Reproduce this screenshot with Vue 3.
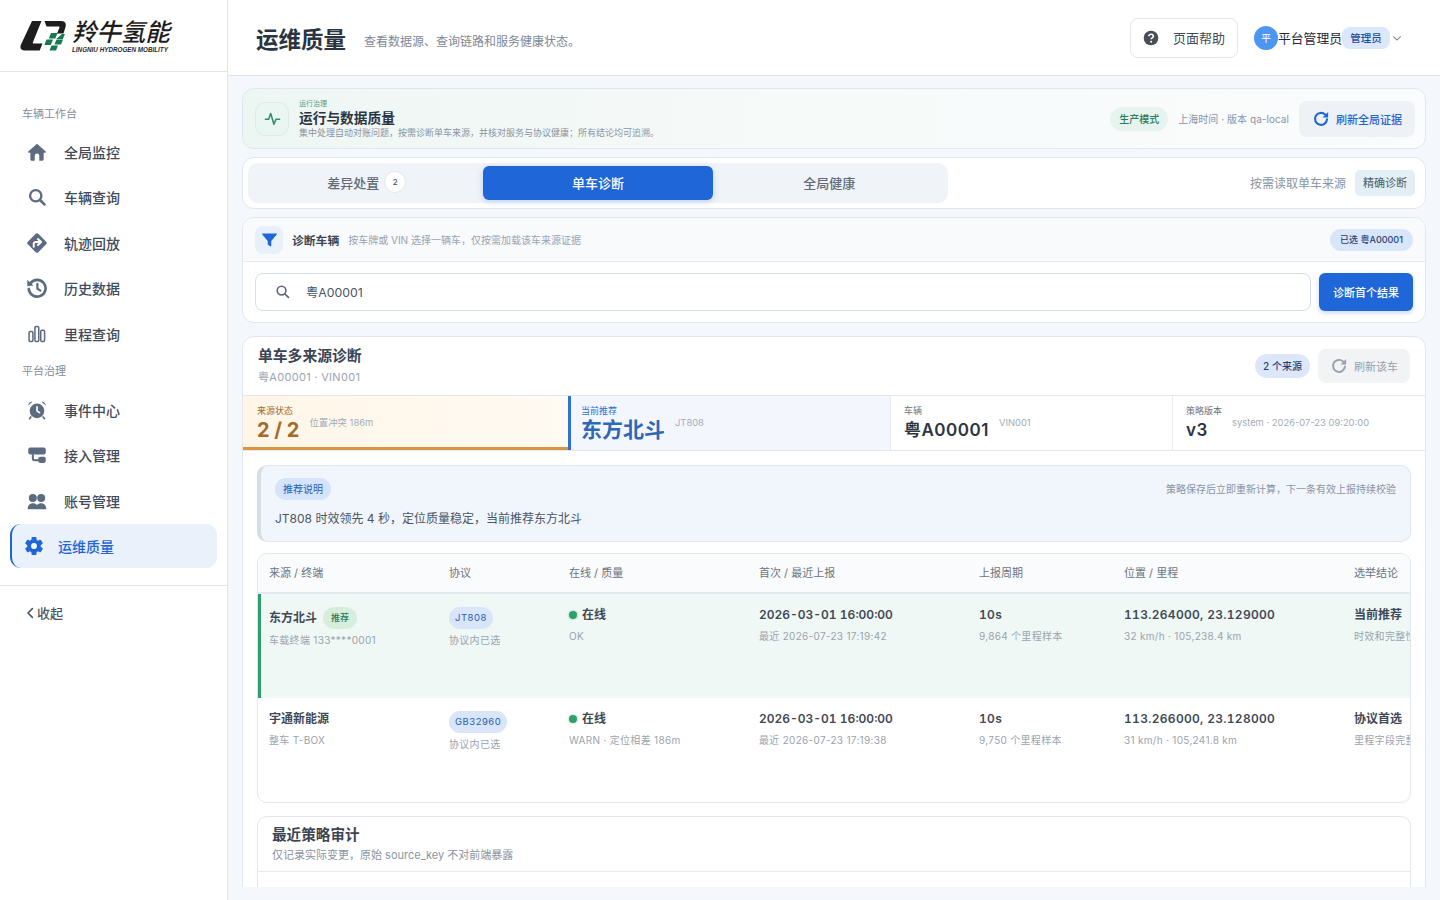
<script setup>
const gearTeeth = [0, 60, 120, 180, 240, 300]

const icons = {
  home: '<path transform="translate(12 12) scale(1.14) translate(-12 -12)" fill="currentColor" d="M12 3.2 2.8 11.6c-.5.5-.2 1.3.5 1.3H5V20a1.2 1.2 0 0 0 1.2 1.2H9.6V16a2.4 2.4 0 0 1 4.8 0v5.2h3.4A1.2 1.2 0 0 0 19 20v-7.1h1.7c.7 0 1-.8.5-1.3Z"/>',
  search: '<circle cx="10.5" cy="10.5" r="6.8" fill="none" stroke="currentColor" stroke-width="2.8"/><path d="M15.6 15.6 21 21" stroke="currentColor" stroke-width="3" stroke-linecap="round"/>',
  route: '<g transform="translate(12 12) scale(1.12) translate(-12 -12)"><path fill="currentColor" d="M10.6 2.2a2 2 0 0 1 2.8 0l8.4 8.4a2 2 0 0 1 0 2.8l-8.4 8.4a2 2 0 0 1-2.8 0l-8.4-8.4a2 2 0 0 1 0-2.8Z"/><path d="M8.5 16v-2.6a2.4 2.4 0 0 1 2.4-2.4h4.6M13 7.8l3.4 3.2-3.4 3.2" fill="none" stroke="#fff" stroke-width="2.1" stroke-linecap="round" stroke-linejoin="round"/></g>',
  history: '<g transform="translate(12 12) scale(1.12) translate(-12 -12)"><path d="M5 6.8A9 9 0 1 1 3.2 13" fill="none" stroke="currentColor" stroke-width="2.8" stroke-linecap="round"/><path fill="currentColor" d="M1.6 3.2 8.2 9.4 1.6 10Z"/><path d="M12.4 7.6V12.6l3.2 2.2" fill="none" stroke="currentColor" stroke-width="2.4" stroke-linecap="round" stroke-linejoin="round"/></g>',
  bars: '<g fill="none" stroke="currentColor" stroke-width="1.8"><rect x="2.5" y="9" width="4.6" height="12" rx="1.4"/><rect x="9.500" y="3" width="4.6" height="18" rx="1.4"/><rect x="16.500" y="7.5" width="4.6" height="13.5" rx="1.4"/></g>',
  alarm: '<circle cx="12" cy="13" r="8.8" fill="currentColor"/><path d="M12 8.2V13l3 2.2" fill="none" stroke="#fff" stroke-width="2" stroke-linecap="round" stroke-linejoin="round"/><path fill="currentColor" d="M1.4 6.600C1.600 3.800 4 1.600 6.600 2.200ZM22.600 6.600c-.2-2.800-2.600-5-5.200-4.400Z"/><path d="m4.600 20.400-1.600 2M19.400 20.400l1.600 2" stroke="currentColor" stroke-width="2" stroke-linecap="round"/>',
  access: '<rect x="1.500" y="3" width="21" height="8.500" rx="2.400" fill="currentColor"/><path d="M7 11v5.200a2 2 0 0 0 2 2h6" fill="none" stroke="currentColor" stroke-width="2.400"/><rect x="13.500" y="14" width="9" height="7.500" rx="2.200" fill="currentColor"/>',
  users: '<g fill="currentColor"><circle cx="7" cy="8.500" r="4.800"/><circle cx="17" cy="8.500" r="4.800"/><path d="M.8 22c0-4.800 2.600-7.400 6.200-7.400 2 0 3.700.8 5 2.200 1.300-1.400 3-2.200 5-2.200 3.600 0 6.200 2.600 6.200 7.400Z"/></g>'
}

const workbench = [
  { label: '全局监控', icon: icons.home },
  { label: '车辆查询', icon: icons.search },
  { label: '轨迹回放', icon: icons.route },
  { label: '历史数据', icon: icons.history },
  { label: '里程查询', icon: icons.bars }
]

const platform = [
  { label: '事件中心', icon: icons.alarm },
  { label: '接入管理', icon: icons.access },
  { label: '账号管理', icon: icons.users }
]

const columns = ['来源 / 终端', '协议', '在线 / 质量', '首次 / 最近上报', '上报周期', '位置 / 里程', '选举结论']

const sources = [
  {
    name: '东方北斗', recommended: true, terminal: '车载终端 133****0001', protocol: 'JT808',
    quality: 'OK', first: '2026-03-01 16:00:00', last: '最近 2026-07-23 17:19:42',
    cycle: '10s', samples: '9,864 个里程样本', position: '113.264000, 23.129000',
    speed: '32 km/h · 105,238.4 km', verdict: '当前推荐', reason: '时效和完整性评分最高'
  },
  {
    name: '宇通新能源', recommended: false, terminal: '整车 T-BOX', protocol: 'GB32960',
    quality: 'WARN · 定位相差 186m', first: '2026-03-01 16:00:00', last: '最近 2026-07-23 17:19:38',
    cycle: '10s', samples: '9,750 个里程样本', position: '113.266000, 23.128000',
    speed: '31 km/h · 105,241.8 km', verdict: '协议首选', reason: '里程字段完整度较高'
  }
]
</script>

<template>
  <div class="shell">
    <aside class="sidebar">
      <div class="brand">
        <svg class="mark" viewBox="0 0 46 31" width="46" height="31">
          <path fill="#1d1d1d" d="M12 1h9.500L13 22c-.4 1 .1 1.500 1 1.500h8.500l-2.800 7H5c-4 0-5.500-2.500-4-6Z"/>
          <path fill="#1d1d1d" d="M24.500 1H41c4 0 5.500 2.500 4.500 6l-2 6.500h-6.500L39.500 7.500c.2-.6 0-1-.7-1H26.500Z"/>
          <path fill="#16794f" d="M31 13h6.500l-2.200 5.500h-6.500ZM42 14h3l-2.200 5h-6.500ZM26.500 19.500h6.500l-2.200 5.500h-6.500ZM36.500 19.500h6.500l-2 5h-6.500ZM31.500 25.500h6.500l-2 5h-6.500Z"/>
        </svg>
        <div class="brand-text">
          <div class="brand-cn">羚牛氢能</div>
          <div class="brand-en">LINGNIU HYDROGEN MOBILITY</div>
        </div>
      </div>
      <nav class="nav">
        <div class="nav-label">车辆工作台</div>
        <a v-for="item in workbench" :key="item.label" class="nav-item">
          <svg class="nav-icon" viewBox="0 0 24 24" v-html="item.icon"></svg>
          <span>{{ item.label }}</span>
        </a>
        <div class="nav-label second">平台治理</div>
        <a v-for="item in platform" :key="item.label" class="nav-item">
          <svg class="nav-icon" viewBox="0 0 24 24" v-html="item.icon"></svg>
          <span>{{ item.label }}</span>
        </a>
        <a class="nav-item active">
          <svg class="nav-icon" viewBox="0 0 24 24">
            <g fill="currentColor">
              <circle cx="12" cy="12" r="8.200" />
              <rect v-for="deg in gearTeeth" :key="deg" x="9" y="1.200" width="6" height="5" rx="1.200" :transform="`rotate(${deg} 12 12)`" />
            </g>
            <circle cx="12" cy="12" r="3.500" fill="#fff" />
          </svg>
          <span>运维质量</span>
        </a>
      </nav>
      <div class="collapse">
        <svg viewBox="0 0 10 14" width="8" height="12"><path d="M8 1.500 2.500 7 8 12.500" fill="none" stroke="#4b5563" stroke-width="2" stroke-linecap="round" stroke-linejoin="round"/></svg>
        <span>收起</span>
      </div>
    </aside>

    <div class="page">
      <header class="topbar">
        <h1>运维质量</h1>
        <p>查看数据源、查询链路和服务健康状态。</p>
        <button class="help">
          <svg viewBox="0 0 24 24" width="16" height="16"><circle cx="12" cy="12" r="11" fill="#4a4f57"/><path d="M8.600 9.300c.2-1.900 1.600-3 3.500-3 2 0 3.400 1.200 3.400 2.900 0 2.500-3.300 2.500-3.300 4.800" fill="none" stroke="#fff" stroke-width="2.300"/><circle cx="12.200" cy="17.500" r="1.500" fill="#fff"/></svg>
          <span>页面帮助</span>
        </button>
        <div class="user">
          <span class="avatar">平</span>
          <span class="user-name">平台管理员</span>
          <span class="user-role">管理员</span>
          <svg viewBox="0 0 12 12" width="10" height="10"><path d="m1.500 4 4.500 4.500L10.500 4" fill="none" stroke="#7b8592" stroke-width="1.300"/></svg>
        </div>
      </header>

      <main class="main">
        <section class="card hero">
          <div class="hero-icon">
            <svg viewBox="0 0 24 24" width="17" height="17"><path d="M2 13h4.500l3-8 4.500 15 3-7h5" fill="none" stroke="#2f8f68" stroke-width="2.200" stroke-linecap="round" stroke-linejoin="round"/></svg>
          </div>
          <div class="hero-text">
            <div class="hero-eyebrow">运行治理</div>
            <div class="hero-title">运行与数据质量</div>
            <div class="hero-desc">集中处理自动对账问题，按需诊断单车来源，并核对服务与协议健康；所有结论均可追溯。</div>
          </div>
          <span class="mode-tag">生产模式</span>
          <span class="hero-meta">上海时间 · 版本 qa-local</span>
          <button class="refresh-all">
            <svg viewBox="0 0 24 24" width="18" height="18"><path d="M20 12.500A8 8 0 1 1 17.500 6" fill="none" stroke="#1f66d9" stroke-width="2.800" stroke-linecap="round"/><path fill="#1f66d9" d="M21.500 2.500v7.500H14Z"/></svg>
            <span>刷新全局证据</span>
          </button>
        </section>

        <section class="card tabs-card">
          <div class="tabs">
            <button class="tab">差异处置<span class="tab-badge">2</span></button>
            <button class="tab current">单车诊断</button>
            <button class="tab">全局健康</button>
          </div>
          <span class="tabs-hint">按需读取单车来源</span>
          <span class="exact-tag">精确诊断</span>
        </section>

        <section class="card filter">
          <div class="filter-head">
            <div class="filter-icon">
              <svg viewBox="0 0 24 24" width="17" height="17"><path fill="#1f66d9" d="M2.500 3.500h19c.8 0 1.200.9.700 1.500L14.500 14v6.800c0 .8-.9 1.200-1.500.8l-3-2.200a1 1 0 0 1-.5-.8V14L1.800 5c-.5-.6-.1-1.500.7-1.500Z"/></svg>
            </div>
            <strong>诊断车辆</strong>
            <span class="filter-desc">按车牌或 VIN 选择一辆车，仅按需加载该车来源证据</span>
            <span class="selected-tag">已选 粤A00001</span>
          </div>
          <div class="filter-body">
            <div class="search-box">
              <svg viewBox="0 0 24 24" width="15" height="15"><circle cx="10.500" cy="10.500" r="7" fill="none" stroke="#5f6874" stroke-width="2.600"/><path d="m16 16 5.500 5.500" stroke="#5f6874" stroke-width="2.800" stroke-linecap="round"/></svg>
              <span>粤A00001</span>
            </div>
            <button class="primary">诊断首个结果</button>
          </div>
        </section>

        <section class="card detail">
          <div class="detail-head">
            <div class="detail-title">
              <h2>单车多来源诊断</h2>
              <div class="detail-sub">粤A00001 · VIN001</div>
            </div>
            <span class="count-tag">2 个来源</span>
            <button class="refresh-one">
              <svg viewBox="0 0 24 24" width="18" height="18"><path d="M20 12.500A8 8 0 1 1 17.500 6" fill="none" stroke="#98a1ac" stroke-width="2.600" stroke-linecap="round"/><path fill="#98a1ac" d="M21.500 2.500v7.500H14Z"/></svg>
              <span>刷新该车</span>
            </button>
          </div>

          <div class="kpis">
            <div class="kpi warn">
              <div>
                <div class="kpi-label">来源状态</div>
                <div class="kpi-value">2 / 2</div>
              </div>
              <span class="kpi-note">位置冲突 186m</span>
            </div>
            <div class="kpi pick">
              <div>
                <div class="kpi-label">当前推荐</div>
                <div class="kpi-value">东方北斗</div>
              </div>
              <span class="kpi-note">JT808</span>
            </div>
            <div class="kpi">
              <div>
                <div class="kpi-label">车辆</div>
                <div class="kpi-value">粤A00001</div>
              </div>
              <span class="kpi-note">VIN001</span>
            </div>
            <div class="kpi">
              <div>
                <div class="kpi-label">策略版本</div>
                <div class="kpi-value">v3</div>
              </div>
              <span class="kpi-note">system · 2026-07-23 09:20:00</span>
            </div>
          </div>

          <div class="detail-body">
            <div class="advice">
              <div class="advice-top">
                <span class="advice-tag">推荐说明</span>
                <span class="advice-hint">策略保存后立即重新计算，下一条有效上报持续校验</span>
              </div>
              <div class="advice-text">JT808 时效领先 4 秒，定位质量稳定，当前推荐东方北斗</div>
            </div>

            <div class="table">
              <div class="row head">
                <div v-for="col in columns" :key="col" class="cell">{{ col }}</div>
              </div>
              <div v-for="src in sources" :key="src.name" class="row" :class="{ best: src.recommended }">
                <div class="cell">
                  <div class="name-line" :class="{ tall: src.recommended }">
                    <strong>{{ src.name }}</strong>
                    <span v-if="src.recommended" class="best-tag">推荐</span>
                  </div>
                  <div class="sub" :class="{ tight: src.recommended }">{{ src.terminal }}</div>
                </div>
                <div class="cell">
                  <span class="proto-tag">{{ src.protocol }}</span>
                  <div class="sub tight">协议内已选</div>
                </div>
                <div class="cell">
                  <div class="online"><i class="dot"></i><strong>在线</strong></div>
                  <div class="sub">{{ src.quality }}</div>
                </div>
                <div class="cell">
                  <strong class="mono time">{{ src.first }}</strong>
                  <div class="sub">{{ src.last }}</div>
                </div>
                <div class="cell">
                  <strong class="mono">{{ src.cycle }}</strong>
                  <div class="sub">{{ src.samples }}</div>
                </div>
                <div class="cell">
                  <strong class="mono">{{ src.position }}</strong>
                  <div class="sub">{{ src.speed }}</div>
                </div>
                <div class="cell">
                  <strong>{{ src.verdict }}</strong>
                  <div class="sub">{{ src.reason }}</div>
                </div>
              </div>
            </div>

            <div class="audit">
              <div class="audit-head">
                <h3>最近策略审计</h3>
                <p>仅记录实际变更，原始 source_key 不对前端暴露</p>
              </div>
              <div class="audit-body"></div>
            </div>
          </div>
        </section>
      </main>
    </div>
  </div>
</template>

<style>
html, body { margin: 0; background: #f4f7fb; }
</style>

<style scoped>
* { box-sizing: border-box; }
.shell {
  display: flex;
  width: 1440px;
  height: 900px;
  overflow: hidden;
  font-family: Inter, "Noto Sans CJK SC", sans-serif;
  color: #1f2937;
}
button { font-family: inherit; cursor: pointer; }
h1, h2, h3, p { margin: 0; }

.sidebar {
  width: 228px;
  flex-shrink: 0;
  background: #fff;
  border-right: 1px solid #dfe4ec;
}
.brand {
  display: flex;
  gap: 6px;
  height: 72px;
  padding: 19px 0 0 20px;
  border-bottom: 1px solid #e3e7ed;
}
.mark { margin-top: 1px; }
.brand-cn {
  font-size: 24.500px;
  line-height: 27px;
  font-style: italic;
  font-weight: 500;
  letter-spacing: -.1px;
  color: #1d1d1d;
}
.brand-en {
  font-family: "Liberation Sans", sans-serif;
  font-size: 6.300px;
  line-height: 8px;
  font-style: italic;
  font-weight: 700;
  color: #2a2a2a;
}
.nav { padding: 27px 10px 17px; border-bottom: 1px solid #e3e7ed; }
.nav-label {
  height: 31px;
  padding: 7px 0 0 12px;
  font-size: 11px;
  line-height: 16px;
  color: #858e9b;
}
.nav-label.second { margin-top: 1px; padding-top: 6px; height: 31px; }
.nav-item {
  display: flex;
  align-items: center;
  gap: 17px;
  height: 44px;
  margin-bottom: 1.400px;
  padding-left: 17px;
  font-size: 14px;
  font-weight: 500;
  color: #414b5a;
}
.nav-icon { width: 20px; height: 20px; color: #5c6b80; }
.nav-item.active {
  height: 44px;
  margin: 0;
  padding-left: 12px;
  gap: 14px;
  color: #1f66d9;
  background: #ebf1fb;
  border-left: 2.500px solid #1f66d9;
  border-radius: 11px;
}
.nav-item.active .nav-icon { color: #1f66d9; }
.collapse {
  display: flex;
  align-items: center;
  gap: 3px;
  padding: 18px 0 0 26px;
  font-size: 13px;
  line-height: 18px;
  font-weight: 500;
  color: #4b5563;
}

.page { flex: 1; min-width: 0; display: flex; flex-direction: column; }
.topbar {
  display: flex;
  align-items: center;
  height: 76px;
  flex-shrink: 0;
  padding: 0 38px 0 28px;
  background: #fff;
  border-bottom: 1px solid #dfe5ee;
}
.topbar h1 { font-size: 22.500px; font-weight: 600; color: #2b3442; }
.topbar p { margin: 6px 0 0 18px; font-size: 12px; color: #7f8896; }
.help {
  display: flex;
  align-items: center;
  gap: 14px;
  height: 40px;
  margin-left: auto;
  padding: 0 12px;
  font-size: 13px;
  color: #414b5a;
  background: #fff;
  border: 1px solid #e2e6ec;
  border-radius: 8px;
}
.user { display: flex; align-items: center; margin-left: 16px; }
.avatar {
  width: 24px;
  height: 24px;
  border-radius: 50%;
  background: #4c96f0;
  color: #fff;
  font-size: 10px;
  line-height: 24px;
  text-align: center;
}
.user-name { font-size: 12.800px; color: #1f2937; }
.user-role {
  width: 48px;
  height: 22px;
  margin-right: 2px;
  font-size: 10.500px;
  font-weight: 500;
  line-height: 23px;
  text-align: center;
  color: #1f4b99;
  background: #dbe8fb;
  border-radius: 8px;
}

.main {
  flex: 1;
  min-height: 0;
  margin: 12px 14px 13px;
  display: flex;
  flex-direction: column;
  gap: 8px;
  overflow: hidden;
}
.card {
  flex-shrink: 0;
  background: #fff;
  border: 1px solid #e2e7ee;
  border-radius: 12px;
}

.hero {
  display: flex;
  align-items: center;
  height: 61px;
  padding: 0 10px 0 12px;
  background: linear-gradient(90deg, #eef6f3 0%, #f6faf9 45%, #fbfcfd 100%);
}
.hero-icon {
  display: flex;
  align-items: center;
  justify-content: center;
  width: 34px;
  height: 34px;
  margin-right: 10px;
  background: #e9f6f1;
  border: 1px solid #dcebe5;
  border-radius: 10px;
}
.hero-eyebrow { font-size: 7px; line-height: 9px; color: #4f9a7c; }
.hero-title { margin-top: 1px; font-size: 13.700px; line-height: 18px; font-weight: 600; color: #2b3442; }
.hero-desc { font-size: 9px; line-height: 12px; color: #8a94a3; }
.mode-tag {
  margin-left: auto;
  width: 58px;
  height: 24px;
  font-size: 10px;
  font-weight: 500;
  line-height: 24px;
  text-align: center;
  color: #2d7a5a;
  background: #e7f4ee;
  border-radius: 12px;
}
.hero-meta { margin: 0 10px; font-size: 10px; letter-spacing: .05px; color: #8a94a3; }
.refresh-all {
  display: flex;
  align-items: center;
  justify-content: center;
  gap: 6px;
  width: 116px;
  height: 36px;
  padding: 0;
  font-size: 11px;
  font-weight: 500;
  color: #1f66d9;
  background: #eef1f5;
  border: 0;
  border-radius: 8px;
}

.tabs-card { display: flex; align-items: center; height: 52px; padding: 0 10px 0 5px; }
.tabs {
  display: grid;
  grid-template-columns: repeat(3, 1fr);
  width: 700px;
  height: 40px;
  padding: 3px;
  background: #f0f3f7;
  border-radius: 10px;
}
.tab {
  display: flex;
  align-items: center;
  justify-content: center;
  gap: 5px;
  padding: 0 0 2px;
  font-size: 13px;
  font-weight: 500;
  color: #5f6b7a;
  background: none;
  border: 0;
  border-radius: 6px;
}
.tab.current { margin: 0 1px; color: #fff; background: #1f66d9; box-shadow: 0 2px 6px rgba(31, 102, 217, .22); }
.tab-badge {
  width: 22px;
  height: 22px;
  font-size: 8px;
  line-height: 20px;
  color: #4b5563;
  background: #fff;
  border: 1px solid #e3e7ed;
  border-radius: 50%;
}
.tabs-hint { margin: 0 9px 2px auto; font-size: 12px; color: #8a94a3; }
.exact-tag {
  width: 60px;
  height: 26px;
  font-size: 11px;
  line-height: 26px;
  text-align: center;
  color: #45606c;
  background: #e3eff4;
  border-radius: 5px;
}

.filter { height: 106px; overflow: hidden; }
.filter-head {
  display: flex;
  align-items: center;
  height: 44px;
  padding: 0 12px;
  background: #f8fafc;
  border-bottom: 1px solid #e8ecf2;
}
.filter-icon {
  display: flex;
  align-items: center;
  justify-content: center;
  width: 28px;
  height: 28px;
  margin-right: 9px;
  background: #e8f0fc;
  border-radius: 8px;
}
.filter-head strong { font-size: 11.800px; font-weight: 600; color: #3b4452; }
.filter-desc { margin-left: 9px; font-size: 10px; color: #9aa3af; }
.selected-tag {
  width: 83px;
  height: 22px;
  margin-left: auto;
  font-size: 9px;
  font-weight: 500;
  line-height: 22px;
  text-align: center;
  color: #1f3f75;
  background: #d9e5f8;
  border-radius: 11px;
}
.filter-body { display: flex; gap: 8px; padding: 11px 12px; }
.search-box {
  display: flex;
  align-items: center;
  gap: 16px;
  flex: 1;
  height: 38px;
  padding: 0 0 1px 19px;
  font-size: 12.300px;
  color: #4b5563;
  background: #fff;
  border: 1px solid #d7dde6;
  border-radius: 8px;
}
.primary {
  width: 94px;
  height: 38px;
  padding: 0;
  font-size: 11px;
  font-weight: 500;
  color: #fff;
  background: #1f66d9;
  border: 0;
  border-radius: 6px;
  box-shadow: 0 2px 5px rgba(31, 102, 217, .25);
}

.detail { margin-top: 5px; }
.detail-head { display: flex; align-items: center; height: 58px; padding: 0 15px; }
.detail-title { padding-bottom: 2px; }
.detail-head h2 { font-size: 14.800px; line-height: 20px; font-weight: 600; color: #3b4452; }
.detail-sub { margin-top: 4px; font-size: 11px; line-height: 14px; letter-spacing: .3px; color: #9aa3af; }
.count-tag {
  width: 55px;
  height: 24px;
  margin-left: auto;
  font-size: 10px;
  font-weight: 500;
  line-height: 24px;
  text-align: center;
  color: #1f3f75;
  background: #dce8f9;
  border-radius: 12px;
}
.refresh-one {
  display: flex;
  align-items: center;
  justify-content: center;
  gap: 6px;
  width: 92px;
  height: 34px;
  margin-left: 8px;
  padding: 0;
  font-size: 11px;
  color: #98a1ac;
  background: #f2f3f5;
  border: 0;
  border-radius: 8px;
}

.kpis {
  display: grid;
  grid-template-columns: 325px 322px 282px 1fr;
  height: 56px;
  border-top: 1px solid #e4e8ee;
  border-bottom: 1px solid #e4e8ee;
}
.kpi {
  display: flex;
  gap: 10px;
  padding: 8px 13px 0;
  border-left: 1px solid #e8ecf1;
}
.kpi-label { font-size: 9px; line-height: 13px; color: #6b7482; }
.kpi-value { margin-top: 1px; font-size: 17px; line-height: 24px; font-weight: 600; letter-spacing: .5px; color: #2b3442; }
.kpi-note { padding-top: 12px; font-size: 9.400px; line-height: 13px; color: #a3abb6; }
.kpi.warn {
  padding-left: 14px;
  padding-top: 8px;
  background: linear-gradient(90deg, #fff6e8, #fffaf2);
  border-left: 0;
  border-bottom: 3px solid #d9953f;
}
.kpi.warn .kpi-label { color: #a5692a; }
.kpi.warn .kpi-value { font-size: 20px; font-weight: 700; letter-spacing: 0; color: #a5692a; }
.kpi.pick { background: #f3f7fd; border-left: 3px solid #2f6fd6; padding-left: 10px; }
.kpi.pick .kpi-label { color: #2f6fd6; }
.kpi.pick .kpi-value { font-size: 21px; font-weight: 600; letter-spacing: 0; color: #2f67b8; }

.detail-body { padding: 14px; }
.advice {
  height: 77px;
  padding: 12px 14px 0 14px;
  background: #f1f6fd;
  border: 1px solid #e0e7f1;
  border-left: 4px solid #d5dde8;
  border-radius: 10px;
}
.advice-top { display: flex; align-items: center; justify-content: space-between; }
.advice-tag {
  width: 56px;
  height: 22px;
  font-size: 10px;
  line-height: 22px;
  text-align: center;
  color: #2560b5;
  background: #d5e4fa;
  border-radius: 11px;
}
.advice-hint { margin-bottom: 2px; font-size: 10px; color: #8a94a3; }
.advice-text { margin-top: 10px; font-size: 12px; line-height: 18px; color: #4b5563; }

.table {
  height: 250px;
  margin-top: 11px;
  overflow: hidden;
  background: #fff;
  border: 1px solid #e2e7ee;
  border-radius: 10px;
}
.row {
  display: grid;
  grid-template-columns: 180px 120px 190px 220px 145px 230px 220px;
  width: 1305px;
  height: 104px;
}
.row.head {
  height: 40px;
  align-items: center;
  font-size: 11px;
  color: #6b7482;
  background: #fafbfc;
  border-bottom: 2px solid #e4e9f1;
}
.row.head .cell { padding-bottom: 3px; }
.row.best { background: #eff8f4; box-shadow: inset 3px 0 0 #2f9e6e; }
.cell { padding: 0 11px; white-space: nowrap; }
.row:not(.head) .cell { padding-top: 13px; }
.row:not(.head) strong { display: block; font-size: 12px; line-height: 16px; font-weight: 600; color: #3f4856; }
.row .mono { font-size: 12px; letter-spacing: .3px; font-variant-numeric: tabular-nums; }
.row .mono.time { letter-spacing: 0; }
.name-line { display: flex; align-items: center; gap: 6px; }
.name-line.tall { height: 22px; }
.best-tag {
  width: 34px;
  height: 22px;
  font-size: 9px;
  font-weight: 500;
  line-height: 22px;
  text-align: center;
  color: #2d7a5a;
  background: #d8eedd;
  border-radius: 11px;
}
.proto-tag {
  display: inline-block;
  height: 22px;
  padding: 0 6px;
  font-size: 9.500px;
  line-height: 22px;
  letter-spacing: .5px;
  vertical-align: top;
  color: #2560b5;
  background: #d9e6f9;
  border-radius: 11px;
}
.sub { margin-top: 5px; font-size: 10px; line-height: 16px; letter-spacing: .3px; color: #9aa3af; }
.sub.tight { margin-top: 3px; }
.online { display: flex; align-items: center; gap: 5px; }
.dot {
  width: 8px;
  height: 8px;
  background: #2f9e6e;
  border-radius: 50%;
  box-shadow: 0 0 0 1.500px rgba(47, 158, 110, .15);
}

.audit {
  height: 120px;
  margin-top: 13px;
  background: #fff;
  border: 1px solid #e2e7ee;
  border-radius: 10px;
}
.audit-head { height: 55px; padding: 8px 14px 0; border-bottom: 1px solid #e6eaf0; }
.audit-head h3 { font-size: 14.600px; line-height: 20px; font-weight: 600; color: #3b4452; }
.audit-head p { margin-top: 3px; font-size: 11px; line-height: 14px; color: #8a94a3; }
</style>
